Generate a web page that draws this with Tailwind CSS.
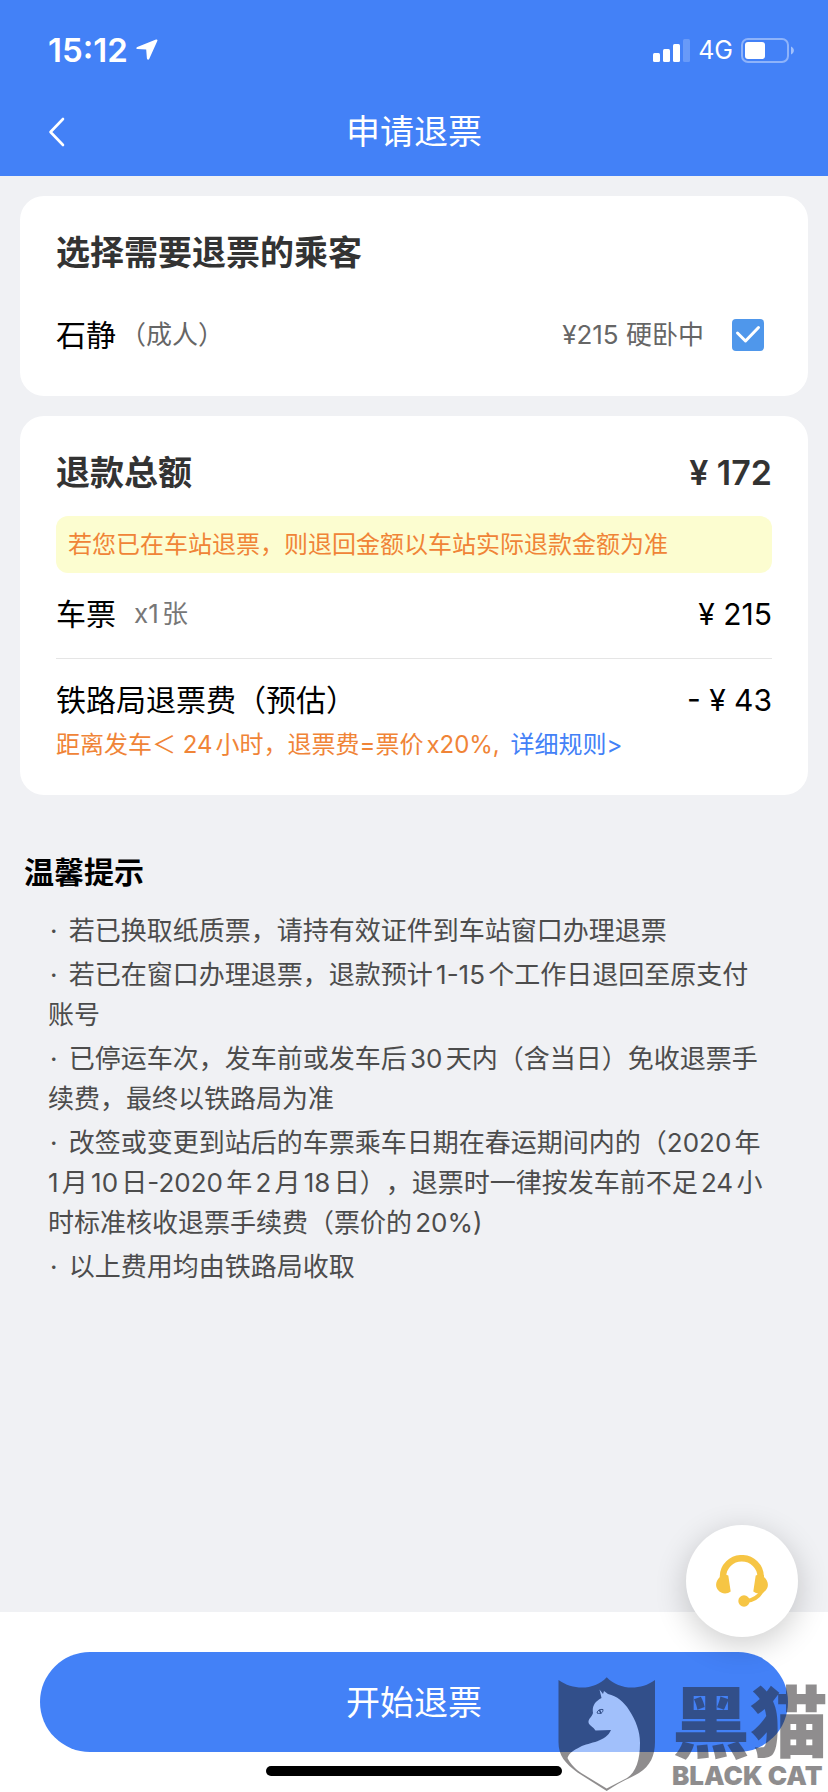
<!DOCTYPE html>
<html lang="zh-CN">
<head>
<meta charset="utf-8">
<meta name="viewport" content="width=device-width, initial-scale=1">
<title>申请退票</title>
<script src="https://cdn.jsdelivr.net/npm/@tailwindcss/browser@4"></script>
</head>
<body class="relative flex min-h-screen flex-col bg-[#f0f1f4] font-['Inter','Noto_Sans_CJK_SC',sans-serif] text-black [text-autospace:normal] [text-spacing-trim:space-all]">

<header class="bg-[#4381f7] text-white">
  <!-- Status bar -->
  <div class="flex h-[88px] items-center justify-between pt-3 pr-[34px] pl-12">
    <div class="flex items-center gap-2">
      <span class="text-[33px] leading-10 font-semibold">15:12</span>
      <svg class="size-[22px]" viewBox="0 0 22 22" fill="currentColor" aria-hidden="true"><path d="M20 .5 1.300 8.100C-.1 8.700.2 10 1.600 10.100L10.200 10.500 10.900 19.300C11 20.900 12.600 21.200 13.300 19.800L21.300 2C21.800 .8 21 .1 20 .5Z"/></svg>
    </div>
    <div class="flex items-center gap-2">
      <svg class="h-[23px] w-[37px]" viewBox="0 0 37 23" fill="currentColor" aria-hidden="true"><rect y="14" width="7" height="9" rx="1.500"/><rect x="10" y="10" width="7" height="13" rx="1.500"/><rect x="20" y="5" width="7" height="18" rx="1.500"/><rect x="30" width="7" height="23" rx="1.500" opacity=".2"/></svg>
      <span class="text-[25px] leading-8">4G</span>
      <svg class="h-[25px] w-[53px]" viewBox="0 0 53 25" fill="currentColor" aria-hidden="true"><rect x="1" y="1" width="46" height="23" rx="6" fill="none" stroke="currentColor" stroke-width="2" opacity=".4"/><rect x="4" y="4" width="20" height="17" rx="3"/><path d="M50 8.500C53.800 10 53.800 15 50 16.500Z" opacity=".5"/></svg>
    </div>
  </div>
  <!-- Title bar -->
  <div class="grid h-[88px] grid-cols-[1fr_auto_1fr] items-center px-10">
    <button type="button" aria-label="返回" class="flex size-10 items-center justify-start pl-2">
      <svg class="h-[30px] w-[18px]" viewBox="0 0 18 30" fill="none" stroke="currentColor" stroke-width="2.600" stroke-linecap="round" stroke-linejoin="round" aria-hidden="true"><path d="M15 2 2.500 15 15 28"/></svg>
    </button>
    <h1 class="text-[34px] leading-10">申请退票</h1>
  </div>
</header>

<main class="flex flex-1 flex-col gap-5 px-5 pt-5">
  <section class="rounded-3xl bg-white px-9 pt-8 pb-9">
    <h2 class="text-[34px] leading-[50px] font-bold text-[#333]">选择需要退票的乘客</h2>
    <label class="mt-8 flex items-center">
      <span class="text-[30px] leading-[50px]">石静</span>
      <span class="ml-1 text-[26px] leading-[50px] text-[#666]">（成人）</span>
      <span class="ml-auto text-[26px] leading-[50px] text-[#666]">¥215 硬卧中</span>
      <span class="relative mr-2 ml-7 size-8">
        <input type="checkbox" name="passenger" checked class="peer block size-8 appearance-none rounded bg-[#ddd] checked:bg-[#4f97eb]">
        <svg class="pointer-events-none absolute inset-0 hidden size-8 peer-checked:block" viewBox="0 0 32 32" fill="none" stroke="#fff" stroke-width="3" stroke-linecap="round" stroke-linejoin="round" aria-hidden="true"><path d="M5.500 14 13.500 22 26.500 8.500"/></svg>
      </span>
    </label>
  </section>

  <section class="rounded-3xl bg-white px-9 pt-8 pb-[30px]">
    <div class="flex items-center justify-between text-[34px] leading-[50px] text-[#333]">
      <h2 class="font-bold">退款总额</h2>
      <span class="font-semibold">¥ 172</span>
    </div>
    <p class="mt-[18px] rounded-xl bg-[#fcfdd0] px-3 py-2 text-[24px] leading-[41px] text-[#f08437]">若您已在车站退票，则退回金额以车站实际退款金额为准</p>
    <div class="flex items-center border-b border-[#e5e5e5] pt-4 pb-[19px] leading-[50px]">
      <span class="text-[30px]">车票</span>
      <span class="ml-[18px] text-[26px] text-[#777]">x1张</span>
      <span class="ml-auto text-[30px]">¥ 215</span>
    </div>
    <div class="mt-4 flex items-center justify-between text-[30px] leading-[50px]">
      <span>铁路局退票费（预估）</span>
      <span>- ¥ 43</span>
    </div>
    <p class="text-[24px] leading-10 text-[#f08437]">距离发车＜ 24小时，退票费=票价x20%, <a href="#rules" class="ml-1 text-[#4381f7]">详细规则&gt;</a></p>
  </section>

  <section class="pt-8">
    <h2 class="pl-1 text-[30px] leading-[50px] font-bold">温馨提示</h2>
    <ul class="mt-[14px] flex flex-col gap-1 pr-9 pl-7 text-[26px] leading-10 text-[#4c4c4c]">
      <li><span class="mr-1 ml-0.5">·</span> 若已换取纸质票，请持有效证件到车站窗口办理退票</li>
      <li><span class="mr-1 ml-0.5">·</span> 若已在窗口办理退票，退款预计1-15个工作日退回至原支付账号</li>
      <li><span class="mr-1 ml-0.5">·</span> 已停运车次，发车前或发车后30天内（含当日）免收退票手续费，最终以铁路局为准</li>
      <li><span class="mr-1 ml-0.5">·</span> 改签或变更到站后的车票乘车日期在春运期间内的（2020年1月10日-2020年2月18日），退票时一律按发车前不足24小时标准核收退票手续费（票价的20%)</li>
      <li><span class="mr-1 ml-0.5">·</span> 以上费用均由铁路局收取</li>
    </ul>
  </section>
</main>

<footer class="flex h-[180px] flex-col items-center bg-white px-10 pt-10">
  <button type="button" class="h-[100px] w-full rounded-full bg-[#4381f7] text-[34px] text-white">开始退票</button>
  <div class="mt-[14px] h-[10px] w-[296px] rounded-full bg-black"></div>
</footer>

<!-- Floating customer service button -->
<button type="button" aria-label="客服" class="absolute right-[30px] bottom-[155px] flex size-28 items-center justify-center rounded-full bg-white shadow-[0_8px_32px_rgba(0,0,0,0.2)]">
  <svg class="size-[52px]" viewBox="0 0 52 52" fill="none" aria-hidden="true">
    <path d="M7 24V21.500A18.800 18.300 0 0 1 44.600 21.500V24" stroke="#f6c544" stroke-width="6.500"/>
    <path d="M4 20.500C5 19 8 18.500 12.300 20.500L14.700 36.500C11 39.500 5 39 2 35-1 31-.5 26 4 22Z" fill="#f6c544"/>
    <path d="M48 20.500C47 19 44 18.500 39.700 20.500L37.300 36.500C41 39.500 47 39 50 35 53 31 52.500 26 48 22Z" fill="#f6c544"/>
    <path d="M46 36C43 41 38 45.500 30 46" stroke="#f6c544" stroke-width="4"/>
    <circle cx="28" cy="46" r="5.700" fill="#f6c544"/>
  </svg>
</button>

<!-- Black Cat watermark -->
<div class="pointer-events-none absolute right-0 bottom-0 flex items-end gap-4 text-[#221e1f] opacity-50">
  <svg class="h-[116px] w-[98px]" viewBox="0 0 98 116" aria-hidden="true">
    <path d="M.5 4C16 15 37 14 48.700 1.300 61 14 82 15 97 4V66C97 80 92 90 81 97 72 102 60 107 48.700 115L19.500 96.500C7 87 .5 80 .5 66Z" fill="currentColor"/>
    <path d="M41.500 13.500 45 18 46 15 50 18C59 20 66 26 71 34 78 45 82 55 82 67 82 84 78 96 69 102L48.700 112.500 24 97.500C17 93 12 87 9.500 82 11 77 16 74 22 71 32 66 48 66 53 54L37.500 54.500C36 51 30 49 30.500 45.500 31 42 34 41 35 37 34 31 36 26 43.500 22Z" fill="#fff"/>
    <path d="M39 37C39.500 34 42 33 45 33.500 45 36.500 43 38.500 39 37Z" fill="none" stroke="currentColor" stroke-width="1"/>
    <path d="M41.500 34 43 37.500" stroke="currentColor" stroke-width="1.600"/>
  </svg>
  <div class="flex flex-col">
    <span class="text-[78px] leading-[72px] font-black">黑猫</span>
    <span class="text-[26px] leading-8 font-black">BLACK CAT</span>
  </div>
</div>
</body>
</html>
